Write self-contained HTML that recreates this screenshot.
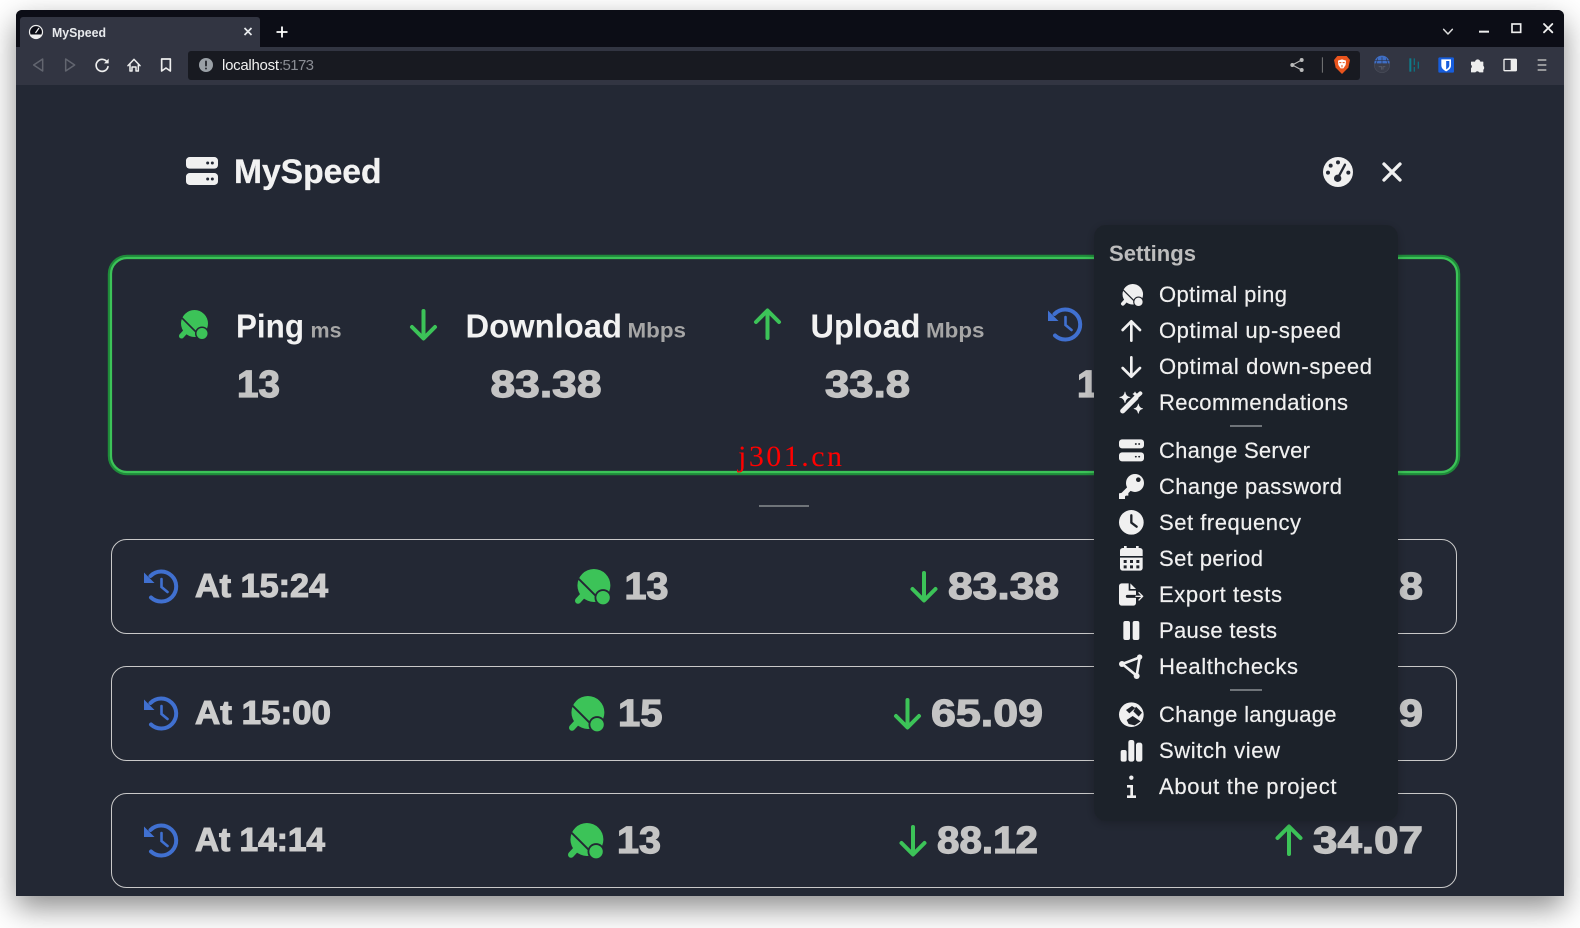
<!DOCTYPE html>
<html lang="en"><head><meta charset="utf-8"><title>MySpeed</title>
<style>
html,body{margin:0;padding:0;background:#fff;width:1580px;height:928px;overflow:hidden}
#win{position:absolute;left:16px;top:10px;width:1548px;height:886px;background:#232834;border-radius:6px 6px 0 0;box-shadow:0 12px 30px rgba(0,0,0,.45)}
svg{position:absolute;left:0;top:0}
text{font-family:"Liberation Sans",sans-serif}
.h{font-weight:700;font-size:33px;fill:#f2f2f2}
.u{font-weight:700;font-size:21px;fill:#a6a6a6}
.v{font-weight:700;font-size:38px;fill:#c4c4c4;stroke:#c4c4c4;stroke-width:1.2}
.t{font-weight:700;font-size:33px;fill:#cdcdcd;stroke:#cdcdcd;stroke-width:1.1}
.m{font-size:22px;fill:#f0f0f0;stroke:#f0f0f0;stroke-width:.2}
</style></head><body>
<div id="win"></div>
<svg width="1580" height="928" viewBox="0 0 1580 928" xmlns="http://www.w3.org/2000/svg">
<defs>
<filter id="ms" x="-10%" y="-10%" width="120%" height="120%"><feDropShadow dx="0" dy="2" stdDeviation="5" flood-color="#000" flood-opacity=".22"/></filter>
<g id="ping">
 <circle cx="15.5" cy="13.5" r="13.5" fill="currentColor"/>
 <path d="M8 20L2.5 26" stroke="currentColor" stroke-width="5" stroke-linecap="round"/>
 <path d="M3 8L18 23" stroke="var(--b)" stroke-width="1.6"/>
 <circle cx="23" cy="23.5" r="7" fill="var(--b)"/>
 <circle cx="23" cy="23.5" r="5.5" fill="currentColor"/>
</g>
<g id="hist" fill="none" stroke="#4070d0">
 <path d="M6.5 7A15 15 0 1 1 7 28.5" stroke-width="4" stroke-linecap="round"/>
 <path d="M0 3.5V14H10.500Z" fill="#4070d0" stroke="none"/>
 <path d="M17.500 10V18L23.500 23" stroke-width="2.600" stroke-linecap="round"/>
</g>
<g id="down" fill="none" stroke="#3cc358" stroke-width="4" stroke-linecap="round" stroke-linejoin="round"><path d="M13.500 2V29M2 18L13.500 29.500L25 18"/></g>
<g id="up" fill="none" stroke="#3cc358" stroke-width="4" stroke-linecap="round" stroke-linejoin="round"><path d="M13.500 29V2M2 13L13.500 1.500L25 13"/></g>
</defs>

<!-- browser chrome -->
<path d="M16 47V16a6 6 0 0 1 6-6H1558a6 6 0 0 1 6 6V47Z" fill="#0c0d16"/>
<rect x="16" y="47" width="1548" height="38" fill="#323542"/>
<path d="M20 47V20a3 3 0 0 1 3-3H257a3 3 0 0 1 3 3V47Z" fill="#323542"/>
<circle cx="36" cy="32" r="6.500" fill="#0c0d16" stroke="#eee" stroke-width="1.200"/>
<path d="M30 34.500a6.500 6.500 0 0 0 12 0Z" fill="#eee"/><path d="M35.500 33l3.500-5" stroke="#eee" stroke-width="1.200"/>
<rect x="188" y="51" width="1172" height="29" rx="3" fill="#181a21"/>
<text x="52" y="37" font-size="13" font-weight="700" fill="#e8eaed" textLength="54" lengthAdjust="spacingAndGlyphs">MySpeed</text>
<path d="M244.500 28l7 7M251.500 28l-7 7" stroke="#e8eaed" stroke-width="1.700"/>
<path d="M282 26.500v11M276.500 32h11" stroke="#fff" stroke-width="1.800"/>
<text x="222" y="70" font-size="15" fill="#f0f0f0" textLength="57">localhost</text>
<text x="279" y="70" font-size="15" fill="#8a8d94" textLength="35">:5173</text>

<g transform="scale(.33333)" fill="none" stroke-linecap="round" stroke-linejoin="round">
 <path d="M128 177L101 195L128 213Z" stroke="#62656f" stroke-width="4.500"/>
 <path d="M197 177L224 195L197 213Z" stroke="#62656f" stroke-width="4.500"/>
 <path d="M322 187A18 18 0 1 0 324 200" stroke="#eee" stroke-width="5"/>
 <path d="M326 176V190H312Z" fill="#eee"/>
 <path d="M384 197L402 178L420 197M390 194V213H396V201H408V213H415V194" stroke="#eee" stroke-width="4.500"/>
 <path d="M485 177H511V213L498 204L485 213Z" stroke="#eee" stroke-width="5"/>
 <circle cx="618" cy="195" r="21" fill="#9aa0a6"/>
 <path d="M618 184V197M618 205V206" stroke="#181a21" stroke-width="5"/>
</g>
<g transform="translate(1080 0) scale(.33333)" fill="none" stroke-linecap="round" stroke-linejoin="round">
 <path d="M1091 88L1104 102L1117 88" stroke="#ddd" stroke-width="4.500"/>
 <rect x="1197" y="92" width="30" height="6" fill="#eee" stroke="none"/>
 <rect x="1296" y="72" width="26" height="25" stroke="#eee" stroke-width="5" stroke-linecap="butt" stroke-linejoin="miter"/>
 <path d="M1392 72L1417 97M1417 72L1392 97" stroke="#eee" stroke-width="5.500"/>
 <path d="M665 180L637 195L665 210" stroke="#bbb" stroke-width="3"/>
 <circle cx="665" cy="180" r="6" fill="#bbb"/><circle cx="637" cy="195" r="6" fill="#bbb"/><circle cx="665" cy="210" r="6" fill="#bbb"/>
 <path d="M727 172V218" stroke="#8a8a8a" stroke-width="2.500" stroke-linecap="butt"/>
 <path d="M772 168H800L810 180L805 203L786 222L767 203L762 180Z" fill="#e9541d"/>
 <path d="M774 182L786 178L798 182L797 195L790 205H782L775 195Z" fill="#fff"/>
 <path d="M779 188h4M789 188h4M786 196v5" stroke="#e9541d" stroke-width="3"/>
 <circle cx="906" cy="195" r="23" fill="#3a3d4a" stroke="#4a4d5a" stroke-width="2"/>
 <path d="M883 190A23 23 0 0 1 929 190Z" fill="#3f6ec4"/>
 <path d="M906 172V190M893 176L889 190M919 176L923 190M885 182H927" stroke="#2b3145" stroke-width="2"/>
 <path d="M897 200h8v8M915 200h-6v8" stroke="#5b5e6a" stroke-width="2.500"/>
 <path d="M991 175V215" stroke="#0f7c8a" stroke-width="6" stroke-linecap="butt"/>
 <path d="M1003 175V195M1003 201V215" stroke="#0f6f7e" stroke-width="4" stroke-linecap="butt"/>
 <path d="M1015 185V206" stroke="#0f6f7e" stroke-width="4" stroke-linecap="butt"/>
 <rect x="1075" y="172" width="47" height="46" rx="4" fill="#175ddc"/>
 <path d="M1084 178H1113V196C1113 206 1104 211 1098.500 214C1093 211 1084 206 1084 196Z" fill="#fff"/>
 <path d="M1098.500 183H1108V196C1108 202 1102 206 1098.500 208Z" fill="#175ddc"/>
 <path d="M1174 186H1186A7 7 0 0 1 1200 186H1209V198A7 7 0 0 1 1209 209V216H1198A7 7 0 0 0 1186 216H1174V205A7 7 0 0 0 1174 194Z" fill="#eee" stroke="#eee" stroke-width="2"/>
 <rect x="1272" y="178" width="37" height="34" rx="2" stroke="#eee" stroke-width="4"/>
 <rect x="1292" y="178" width="17" height="34" fill="#eee" stroke="none"/>
 <path d="M1373 180H1399M1373 195H1399M1373 210H1399" stroke="#b8b8b8" stroke-width="4.500" stroke-linecap="butt"/>
</g>

<!-- header -->
<g transform="scale(.33333)">
 <rect x="558" y="471" width="96" height="35" rx="11" fill="#f0f0f0"/>
 <rect x="558" y="519" width="96" height="36" rx="11" fill="#f0f0f0"/>
 <circle cx="623" cy="489" r="4.500" fill="#232834"/><circle cx="637" cy="489" r="4.500" fill="#232834"/>
 <circle cx="623" cy="537" r="4.500" fill="#232834"/><circle cx="637" cy="537" r="4.500" fill="#232834"/>
</g>
<text x="234" y="183" font-size="34" font-weight="700" fill="#f2f2f2" stroke="#f2f2f2" stroke-width=".3" textLength="147.500" lengthAdjust="spacingAndGlyphs">MySpeed</text>
<g transform="translate(1080 0) scale(.33333)">
 <circle cx="774" cy="516" r="45" fill="#f0f0f0"/>
 <circle cx="744" cy="518" r="6" fill="#232834"/><circle cx="752" cy="497" r="6" fill="#232834"/><circle cx="774" cy="487" r="6" fill="#232834"/><circle cx="805" cy="518" r="6" fill="#232834"/>
 <circle cx="773" cy="535" r="11" fill="#232834"/>
 <path d="M773 535L795 494" stroke="#232834" stroke-width="7" stroke-linecap="round"/>
 <path d="M912 492L960 540M960 492L912 540" stroke="#f0f0f0" stroke-width="10" stroke-linecap="round"/>
</g>

<!-- main card -->
<rect x="109" y="256" width="1350" height="218" rx="18" fill="none" stroke="#1f8a3a" stroke-width="2.400"/>
<rect x="111" y="258" width="1346" height="214" rx="16" fill="none" stroke="#3cc358" stroke-width="2.200"/>

<use href="#ping" x="179" y="310" style="color:#3cc358;--b:#232834"/>
<text class="h" x="236" y="337.500" textLength="68" lengthAdjust="spacingAndGlyphs">Ping</text>
<text class="u" x="310.500" y="337.500" textLength="31" lengthAdjust="spacingAndGlyphs">ms</text>
<text class="v" x="237" y="397" textLength="43" lengthAdjust="spacingAndGlyphs">13</text>
<use href="#down" x="410" y="309"/>
<text class="h" x="465.500" y="337.500" textLength="156.500" lengthAdjust="spacingAndGlyphs">Download</text>
<text class="u" x="627.500" y="337.500" textLength="58.500" lengthAdjust="spacingAndGlyphs">Mbps</text>
<text class="v" x="490.500" y="397" textLength="111" lengthAdjust="spacingAndGlyphs">83.38</text>
<use href="#up" x="754" y="309"/>
<text class="h" x="810.500" y="337.500" textLength="110" lengthAdjust="spacingAndGlyphs">Upload</text>
<text class="u" x="926" y="337.500" textLength="58.500" lengthAdjust="spacingAndGlyphs">Mbps</text>
<text class="v" x="825" y="397" textLength="85" lengthAdjust="spacingAndGlyphs">33.8</text>
<use href="#hist" x="1048" y="307"/>
<text class="v" x="1077" y="397">1</text>

<text x="738" y="466" font-size="30" fill="#f00" style="font-family:'Liberation Serif',serif" textLength="104">j301.cn</text>
<rect x="759" y="505" width="50" height="2" fill="#6f7479"/>

<!-- rows -->
<rect x="111.500" y="539.500" width="1345" height="94" rx="15" fill="none" stroke="#c9c9c9"/>
<rect x="111.500" y="666.500" width="1345" height="94" rx="15" fill="none" stroke="#c9c9c9"/>
<rect x="111.500" y="793.500" width="1345" height="94" rx="15" fill="none" stroke="#c9c9c9"/>

<use href="#hist" x="144" y="569"/>
<text class="t" x="195" y="597" textLength="133" lengthAdjust="spacingAndGlyphs">At 15:24</text>
<use href="#ping" transform="translate(575 569) scale(1.220)" style="color:#3cc358;--b:#232834"/>
<text class="v" x="624.500" y="599" textLength="44" lengthAdjust="spacingAndGlyphs">13</text>
<use href="#down" x="910.500" y="571"/>
<text class="v" x="948" y="599" textLength="111" lengthAdjust="spacingAndGlyphs">83.38</text>
<text class="v" x="1399" y="599" textLength="24" lengthAdjust="spacingAndGlyphs">8</text>

<use href="#hist" x="144" y="696"/>
<text class="t" x="195" y="724" textLength="136" lengthAdjust="spacingAndGlyphs">At 15:00</text>
<use href="#ping" transform="translate(569 696) scale(1.220)" style="color:#3cc358;--b:#232834"/>
<text class="v" x="618" y="726" textLength="44.500" lengthAdjust="spacingAndGlyphs">15</text>
<use href="#down" x="894" y="698"/>
<text class="v" x="931" y="726" textLength="112" lengthAdjust="spacingAndGlyphs">65.09</text>
<text class="v" x="1399" y="726" textLength="24" lengthAdjust="spacingAndGlyphs">9</text>

<use href="#hist" x="144" y="823"/>
<text class="t" x="195" y="851" textLength="130" lengthAdjust="spacingAndGlyphs">At 14:14</text>
<use href="#ping" transform="translate(568 823) scale(1.220)" style="color:#3cc358;--b:#232834"/>
<text class="v" x="617" y="853" textLength="44" lengthAdjust="spacingAndGlyphs">13</text>
<use href="#down" x="899.500" y="825"/>
<text class="v" x="937" y="853" textLength="101" lengthAdjust="spacingAndGlyphs">88.12</text>
<use href="#up" x="1275.500" y="825"/>
<text class="v" x="1313" y="853" textLength="110" lengthAdjust="spacingAndGlyphs">34.07</text>

<!-- settings menu -->
<rect x="1094" y="225" width="304" height="596" rx="12" fill="#1e2229" filter="url(#ms)"/>
<text x="1109" y="261" font-size="22" font-weight="700" fill="#bdbdbd" textLength="87" lengthAdjust="spacingAndGlyphs">Settings</text>
<text class="m" x="1159" y="302" textLength="128">Optimal ping</text>
<text class="m" x="1159" y="338" textLength="182">Optimal up-speed</text>
<text class="m" x="1159" y="374" textLength="213">Optimal down-speed</text>
<text class="m" x="1159" y="410" textLength="189">Recommendations</text>
<text class="m" x="1159" y="458" textLength="151">Change Server</text>
<text class="m" x="1159" y="494" textLength="183">Change password</text>
<text class="m" x="1159" y="530" textLength="142">Set frequency</text>
<text class="m" x="1159" y="566" textLength="104">Set period</text>
<text class="m" x="1159" y="602" textLength="123">Export tests</text>
<text class="m" x="1159" y="638" textLength="118">Pause tests</text>
<text class="m" x="1159" y="674" textLength="139">Healthchecks</text>
<text class="m" x="1159" y="722" textLength="177.500">Change language</text>
<text class="m" x="1159" y="758" textLength="121">Switch view</text>
<text class="m" x="1159" y="794" textLength="177.500">About the project</text>
<rect x="1230" y="425" width="32" height="2" fill="#6f7479"/>
<rect x="1230" y="689" width="32" height="2" fill="#6f7479"/>

<use href="#ping" transform="translate(1121 284) scale(.76)" style="color:#f0f0f0;--b:#1e2229"/>
<g transform="translate(1080 220) scale(.33333)" fill="none" stroke-linecap="round" stroke-linejoin="round">
 <path d="M154 362V304M128 330L154 304L180 330" stroke="#f0f0f0" stroke-width="8"/>
 <path d="M154 412V470M128 444L154 470L180 444" stroke="#f0f0f0" stroke-width="8"/>
 <path d="M128 573L168 533" stroke="#f0f0f0" stroke-width="15"/>
 <path d="M172 528L181 520" stroke="#f0f0f0" stroke-width="12"/>
 <path d="M135 516Q137 530 150 532Q137 534 135 548Q133 534 119 532Q133 530 135 516ZM175 552Q177 564 188 566Q177 568 175 580Q173 568 162 566Q173 564 175 552ZM165 516Q166 521 171 522Q166 523 165 528Q164 523 159 522Q164 521 165 516Z" fill="#f0f0f0" stroke="#f0f0f0" stroke-width="2"/>
 <rect x="117" y="658" width="75" height="27" rx="9" fill="#f0f0f0" stroke="none"/>
 <rect x="117" y="697" width="75" height="27" rx="9" fill="#f0f0f0" stroke="none"/>
 <path d="M167 672h1M177 672h1M167 710h1M177 710h1" stroke="#1e2229" stroke-width="5"/>
 <circle cx="165" cy="789" r="27" fill="#f0f0f0"/>
 <circle cx="175" cy="779" r="7" fill="#1e2229"/>
 <path d="M148 806L124 830" stroke="#f0f0f0" stroke-width="15" stroke-linecap="butt"/>
 <path d="M117 820V837H135V827H145V815Z" fill="#f0f0f0" stroke="none"/>
</g>
<g transform="translate(1080 500) scale(.33333)" fill="none" stroke-linecap="round" stroke-linejoin="round">
 <circle cx="154" cy="67" r="37" fill="#f0f0f0"/>
 <path d="M154 46V68L170 80" stroke="#1e2229" stroke-width="7"/>
 <path d="M136 138V152M172 138V152" stroke="#f0f0f0" stroke-width="8" stroke-linecap="butt"/>
 <path d="M120 168V152A8 8 0 0 1 128 144H180A8 8 0 0 1 188 152V168Z" fill="#f0f0f0" stroke="none"/>
 <path d="M120 173H188V204A8 8 0 0 1 180 212H128A8 8 0 0 1 120 204Z" fill="#f0f0f0" stroke="none"/>
 <path d="M131 180h9v9h-9zM150 180h9v9h-9zM169 180h9v9h-9zM131 196h9v9h-9zM150 196h9v9h-9zM169 196h9v9h-9z" fill="#1e2229" stroke="none"/>
 <path d="M117 258A8 8 0 0 1 125 250H146V272H168V309A8 8 0 0 1 160 317H125A8 8 0 0 1 117 309Z" fill="#f0f0f0" stroke="none"/>
 <path d="M151 250L168 267H151Z" fill="#f0f0f0" stroke="none"/>
 <path d="M142 289H188M177 278L188 289L177 300" stroke="#1e2229" stroke-width="9"/>
 <path d="M168 289H188M177 278L188 289L177 300" stroke="#f0f0f0" stroke-width="4"/>
 <rect x="130" y="363" width="20" height="57" rx="6" fill="#f0f0f0" stroke="none"/>
 <rect x="158" y="363" width="20" height="57" rx="6" fill="#f0f0f0" stroke="none"/>
 <path d="M127 492L179 472L170 527Z" stroke="#f0f0f0" stroke-width="8"/>
 <circle cx="126" cy="492" r="9" fill="#f0f0f0"/><circle cx="179" cy="471" r="8" fill="#f0f0f0"/><circle cx="170" cy="528" r="9" fill="#f0f0f0"/>
 <circle cx="154" cy="644" r="37" fill="#f0f0f0"/>
 <path d="M138 630L156 618L166 624L148 640ZM168 620L186 638L176 650L160 634ZM140 660L158 648L182 664L164 676L146 672Z" fill="#1e2229" stroke="none"/>
 <rect x="122" y="750" width="18" height="35" rx="6" fill="#f0f0f0" stroke="none"/>
 <rect x="145" y="720" width="18" height="65" rx="7" fill="#f0f0f0" stroke="none"/>
 <rect x="168" y="728" width="19" height="57" rx="7" fill="#f0f0f0" stroke="none"/>
 <circle cx="154" cy="833" r="6.500" fill="#f0f0f0" stroke="none"/>
 <path d="M141 859H155V889M141 890H168" stroke="#f0f0f0" stroke-width="8" stroke-linecap="butt" stroke-linejoin="miter"/>
</g>
</svg>
</body></html>
